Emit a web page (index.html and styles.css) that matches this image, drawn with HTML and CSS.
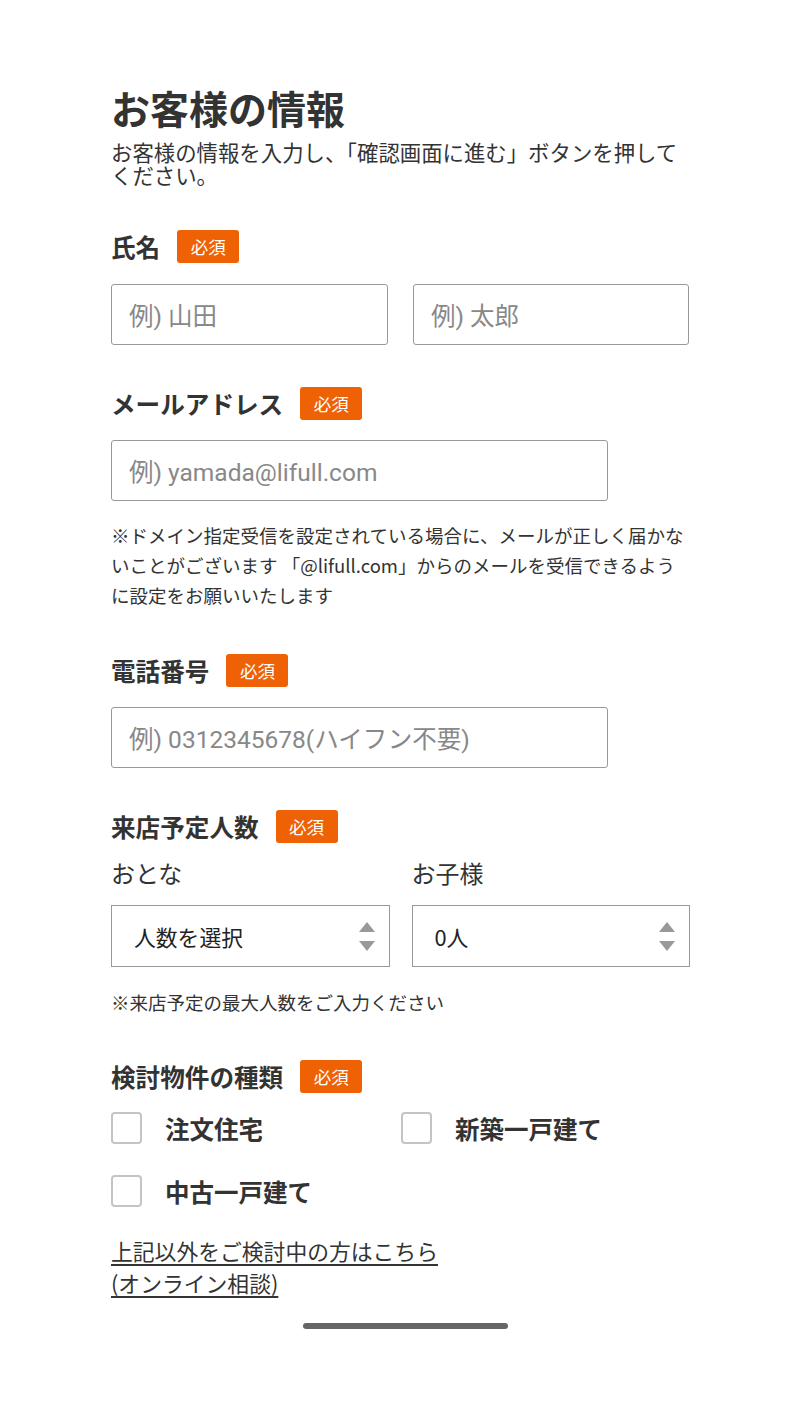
FILE: index.html
```html
<!DOCTYPE html>
<html lang="ja">
<head>
<meta charset="utf-8">
<link rel="stylesheet" href="styles.css">
</head>
<body>
<main class="page">
  <h1 class="title">お客様の情報</h1>
  <p class="lead">お客様の情報を入力し、「確認画面に進む」ボタンを押してください。</p>

  <section class="field sec-name">
    <div class="label"><span class="label-text">氏名</span><span class="badge">必須</span></div>
    <div class="row2">
      <div class="input"><span class="ph">例) 山田</span></div>
      <div class="input"><span class="ph">例) 太郎</span></div>
    </div>
  </section>

  <section class="field sec-email">
    <div class="label"><span class="label-text">メールアドレス</span><span class="badge">必須</span></div>
    <div class="input wide"><span class="ph">例) yamada@lifull.com</span></div>
    <p class="note">※ドメイン指定受信を設定されている場合に、メールが正しく届かないことがございます 「@lifull.com」からのメールを受信できるように設定をお願いいたします</p>
  </section>

  <section class="field sec-phone">
    <div class="label"><span class="label-text">電話番号</span><span class="badge">必須</span></div>
    <div class="input wide"><span class="ph">例) 0312345678(ハイフン不要)</span></div>
  </section>

  <section class="field sec-visit">
    <div class="label"><span class="label-text">来店予定人数</span><span class="badge">必須</span></div>
    <div class="row2 selects">
      <div class="col">
        <div class="sublabel">おとな</div>
        <div class="select"><span>人数を選択</span><span class="arrows"><i class="up"></i><i class="down"></i></span></div>
      </div>
      <div class="col">
        <div class="sublabel">お子様</div>
        <div class="select"><span>0人</span><span class="arrows"><i class="up"></i><i class="down"></i></span></div>
      </div>
    </div>
    <p class="note small">※来店予定の最大人数をご入力ください</p>
  </section>

  <section class="field sec-type">
    <div class="label"><span class="label-text">検討物件の種類</span><span class="badge">必須</span></div>
    <div class="checks">
      <label class="check"><span class="box"></span><span class="check-text">注文住宅</span></label>
      <label class="check"><span class="box"></span><span class="check-text">新築一戸建て</span></label>
      <label class="check"><span class="box"></span><span class="check-text">中古一戸建て</span></label>
    </div>
    <a class="link" href="#">上記以外をご検討中の方はこちら<br>(オンライン相談)</a>
  </section>

  <div class="home-bar"></div>
</main>
</body>
</html>
```

FILE: styles.css
```css
* { box-sizing: border-box; }
html, body { margin: 0; padding: 0; background: #fff; }
body {
  font-family: Roboto, "Noto Sans CJK JP", sans-serif;
  color: #333;
}
.page {
  width: 800px;
  padding: 82px 110px 0 111px;
  display: flex;
  flex-direction: column;
}
.title {
  margin: 0;
  font-family: "Noto Sans CJK JP", sans-serif;
  font-size: 39px;
  font-weight: 700;
  line-height: 50px;
  color: #333;
}
.lead {
  margin: 8px 0 0;
  font-family: "Noto Sans CJK JP", sans-serif;
  font-size: 21.4px;
  line-height: 23px;
  color: #333;
}
.field { display: flex; flex-direction: column; }
.sec-name { margin-top: 44px; }
.sec-email { margin-top: 42px; }
.sec-phone { margin-top: 44px; }
.sec-visit { margin-top: 42px; }
.sec-type { margin-top: 43px; }
.label {
  display: flex;
  align-items: center;
  height: 32px;
  font-family: "Noto Sans CJK JP", sans-serif;
}
.label-text {
  font-size: 24.6px;
  font-weight: 700;
  color: #333;
}
.badge {
  margin-left: 17px;
  width: 62px;
  height: 33px;
  background: #ee6205;
  color: #fff;
  border-radius: 3px;
  font-size: 17.5px;
  display: flex;
  align-items: center;
  justify-content: center;
}
.row2 {
  display: grid;
  grid-template-columns: 277px 276px;
  column-gap: 25px;
  margin-top: 22px;
}
.input {
  height: 61px;
  border: 1.5px solid #999;
  border-radius: 3px;
  display: flex;
  align-items: center;
  padding-left: 17px;
}
.input.wide { width: 497px; margin-top: 21px; }
.ph {
  font-size: 24.5px;
  color: #888;
  font-family: Roboto, "Noto Sans CJK JP", sans-serif;
}
.note {
  margin: 19px 0 0;
  font-family: "Noto Sans CJK JP", sans-serif;
  font-size: 18.5px;
  line-height: 30px;
  color: #333;
}
.note.small { margin-top: 20px; }
.selects { grid-template-columns: 1fr 1fr; column-gap: 22px; margin-top: 16px; }
.col { display: flex; flex-direction: column; }
.sublabel {
  font-family: "Noto Sans CJK JP", sans-serif;
  font-size: 24px;
  line-height: 30px;
  color: #333;
  margin-bottom: 17px;
}
.select {
  height: 62px;
  border: 1.5px solid #999;
  display: flex;
  align-items: center;
  justify-content: space-between;
  padding: 0 14px 0 22px;
  font-family: "Noto Sans CJK JP", sans-serif;
  font-size: 21.8px;
  color: #222;
}
.arrows {
  display: flex;
  flex-direction: column;
  gap: 9px;
}
.arrows i {
  display: block;
  width: 0;
  height: 0;
  border-left: 8px solid transparent;
  border-right: 8px solid transparent;
}
.arrows .up { border-bottom: 10px solid #999; }
.arrows .down { border-top: 10px solid #999; }
.checks {
  display: grid;
  grid-template-columns: 290px 1fr;
  row-gap: 23px;
  margin-top: 16px;
}
.check {
  display: flex;
  align-items: center;
  height: 40px;
}
.box {
  width: 31px;
  height: 32px;
  border: 2px solid #c4c4c4;
  border-radius: 4px;
  flex: none;
}
.check-text {
  margin-left: 23px;
  font-family: "Noto Sans CJK JP", sans-serif;
  font-size: 24.5px;
  font-weight: 700;
  color: #333;
}
.link {
  margin-top: 24px;
  font-family: "Noto Sans CJK JP", sans-serif;
  font-size: 21.8px;
  line-height: 32px;
  color: #333;
  text-decoration: underline;
  text-decoration-thickness: 1.5px;
  text-underline-offset: 4px;
  align-self: flex-start;
}
.home-bar {
  align-self: center;
  margin: 24px 0 0 9px;
  width: 205px;
  height: 6px;
  border-radius: 3px;
  background: #666;
}
```
